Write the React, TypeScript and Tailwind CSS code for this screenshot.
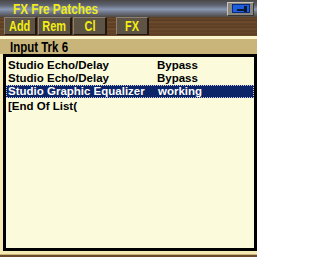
import React from "react";

const font = { fontFamily: '"Liberation Sans", Arial, sans-serif' };

function Btn({ label, w }: { label: string; w: string }) {
  return (
    <div
      className={`${w} h-[18px] flex items-center justify-center bg-[#5e5446] border-t border-l border-t-[#8c8070] border-l-[#8c8070] border-r-2 border-b border-r-[#221810] border-b-[#221810]`}
    >
      <span className="inline-block text-[#f2ee10] text-[14px] font-bold leading-none scale-x-[0.78] whitespace-nowrap">
        {label}
      </span>
    </div>
  );
}

export default function App() {
  return (
    <div
      className="w-[257px] h-[257px] overflow-hidden flex flex-col bg-[#f5eab4]"
      style={font}
    >
      {/* title bar */}
      <div className="h-[17px] flex items-center justify-between bg-[linear-gradient(180deg,#4a4846_0%,#5e6270_30%,#8a98b2_55%,#6c7282_75%,#4e4a44_100%)]">
        <span className="ml-[13px] inline-block origin-left scale-x-[0.84] text-[14px] font-bold text-[#f0ec1c] leading-none whitespace-nowrap">
          FX Fre Patches
        </span>
        <div className="mr-[3px] w-[27px] h-[14px] bg-[#8a8680] border border-t-[#c8c4bc] border-l-[#c8c4bc] border-r-[#3a3630] border-b-[#3a3630] flex items-center justify-center">
          <div className="w-[18px] h-[9px] bg-[#1e5fe0] border border-[#0a2a80] relative">
            <div className="absolute left-[4px] top-[4px] w-[9px] h-[2px] bg-[#101830]" />
            <div className="absolute left-[11px] top-[1px] w-[3px] h-[6px] bg-[#101830]" />
          </div>
        </div>
      </div>
      {/* button row */}
      <div className="h-[19px] flex items-start pl-[4px] gap-[1px] bg-[repeating-linear-gradient(180deg,#5a3c22_0px,#6b4a2c_2px,#553820_3px,#704e30_5px,#5c3e24_7px)]">
        <Btn label="Add" w="w-[33px]" />
        <Btn label="Rem" w="w-[34px]" />
        <Btn label="Cl" w="w-[34px]" />
        <div className="w-[7px]" />
        <Btn label="FX" w="w-[33px]" />
      </div>
      {/* light strip */}
      <div className="h-[3px] bg-[#faf4cc]" />
      {/* header */}
      <div className="h-[15px] flex items-center bg-[#c9b57a] pl-[10px]">
        <span className="inline-block origin-left scale-x-[0.82] text-[14px] font-bold text-black leading-none whitespace-nowrap">
          Input Trk 6
        </span>
      </div>
      {/* list area */}
      <div className="flex-1 flex pl-[3px] pb-[3px]">
        <div className="flex-1 border-[3px] border-black bg-[#fbfbdc] pt-[2px] text-[11.5px] font-bold leading-[13px] text-black whitespace-nowrap">
          <div className="flex h-[13px] items-center pl-[2px]">
            <span className="w-[149px]">Studio Echo/Delay</span>
            <span>Bypass</span>
          </div>
          <div className="flex h-[13px] items-center pl-[2px]">
            <span className="w-[149px]">Studio Echo/Delay</span>
            <span>Bypass</span>
          </div>
          <div className="flex h-[13px] items-center pl-[1px] bg-[#0c2468] text-white border border-dotted border-[#c8c8e0]">
            <span className="w-[150px]">Studio Graphic Equalizer</span>
            <span>working</span>
          </div>
          <div className="flex h-[13px] items-center pl-[2px] mt-[2px]">
            <span>[End Of List(</span>
          </div>
        </div>
      </div>
      <div className="h-[1px] bg-[#c9b57a]" />
      <div className="h-[2px] bg-[#6b4a2c]" />
    </div>
  );
}
